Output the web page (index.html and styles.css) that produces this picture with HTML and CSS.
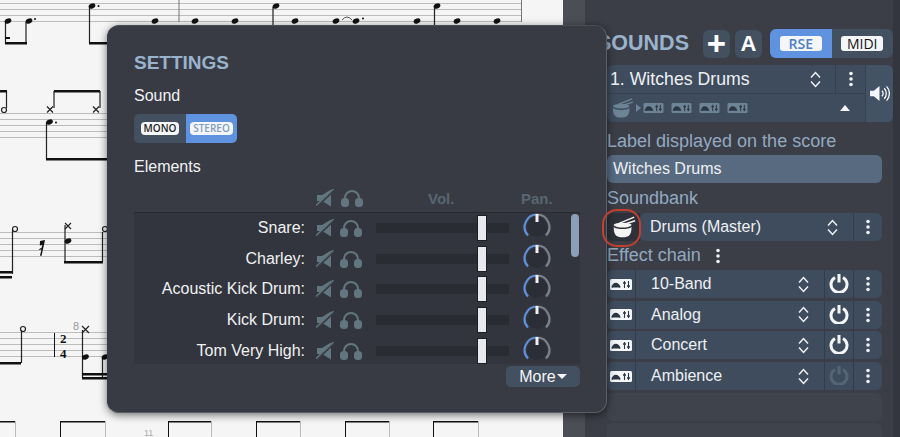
FILE: index.html
```html
<!DOCTYPE html>
<html lang="en">
<head>
<meta charset="utf-8">
<title>Sounds settings</title>
<link rel="stylesheet" href="styles.css">
</head>
<body>
<svg class="sprite" aria-hidden="true">
  <symbol id="i-mute" viewBox="0 0 18 18"><path d="M1 6h5l9-5.500v17L6 12H1z" fill="currentColor"/><path d="M0 18 18 1" stroke="#383b44" stroke-width="2.500"/><path d="M0 16.500 17.500 0" stroke="currentColor" stroke-width="1.400"/></symbol>
  <symbol id="i-head" viewBox="0 0 22 18"><path d="M4 11V9a7 7 0 0 1 14 0v2" fill="none" stroke="currentColor" stroke-width="2"/><rect x="0" y="9" width="8" height="9" rx="3.500" fill="currentColor"/><rect x="14" y="9" width="8" height="9" rx="3.500" fill="currentColor"/></symbol>
  <symbol id="i-knob" viewBox="0 0 30 30"><circle cx="15" cy="14" r="10" fill="#2b2e36"/><path d="M6 22.500A12.500 12.500 0 0 1 15 1.500" fill="none" stroke="#5f8fd8" stroke-width="2.200"/><path d="M15 1.500A12.500 12.500 0 0 1 24 22.500" fill="none" stroke="#7a818c" stroke-width="2.200"/><rect x="13.500" y="1" width="3" height="8" fill="#f0f0f4"/></symbol>
  <symbol id="i-updown" viewBox="0 0 11 17"><path d="M1 6.500 5.500 1.500 10 6.500M1 10.500 5.500 15.500 10 10.500" fill="none" stroke="currentColor" stroke-width="1.500"/></symbol>
  <symbol id="i-dots" viewBox="0 0 4 16"><circle cx="2" cy="2.500" r="1.800" fill="currentColor"/><circle cx="2" cy="8" r="1.800" fill="currentColor"/><circle cx="2" cy="13.500" r="1.800" fill="currentColor"/></symbol>
  <symbol id="i-power" viewBox="0 0 20 20"><path d="M6 4.500a8 8 0 1 0 8 0" fill="none" stroke="currentColor" stroke-width="3"/><path d="M10 1v8.500" stroke="currentColor" stroke-width="3"/></symbol>
  <symbol id="i-fx" viewBox="0 0 22 11"><rect width="22" height="11" rx="1.500" fill="currentColor"/><path d="M2 8.500C3.500 3 8 3 10 8.500" fill="#2d3744" stroke="#2d3744" stroke-width="1.500"/><path d="M14.500 2v7M18.500 2v7" stroke="#2d3744" stroke-width="1.100"/><path d="M13 4h3M17 7h3" stroke="#2d3744" stroke-width="1.300"/></symbol>
  <symbol id="i-drum" viewBox="0 0 28 24"><path d="M3 12c0 9 3 11.500 10 11.500S23 21 23 12c-3 3-17 3-20 0z" fill="currentColor"/><path d="M3 10c3 3.500 17 3.500 20 0v-.5c-2-3-18-3-20 0z" fill="currentColor"/><path d="M9 8 26 1M13 9.500 27 5" stroke="currentColor" stroke-width="1.600"/></symbol>
  <symbol id="i-speaker" viewBox="0 0 22 18"><path d="M1 6h4l6-5v16l-6-5H1z" fill="currentColor"/><path d="M13.500 6a4 4 0 0 1 0 6M16 3.500a8 8 0 0 1 0 11M18.500 1.500a11 11 0 0 1 0 15" fill="none" stroke="currentColor" stroke-width="1.400"/></symbol>
</svg>

<div class="app">
  <main class="score">
    <svg class="notation" width="563" height="437" viewBox="0 0 563 437">
      <g stroke="#bcbcbc" stroke-width="1" fill="none">
        <path d="M0 3.500H521M0 9.500H521M0 15.500H521M0 21.500H521"/>
        <path d="M0 113.500H107M0 119.500H107M0 125.500H107M0 131.500H107M0 137.500H107"/>
        <path d="M0 232.500H107M0 238.500H107M0 244.500H107M0 250.500H107M0 256.500H107"/>
        <path d="M0 332.500H107M0 338.500H107M0 344.500H107M0 350.500H107M0 356.500H107"/>
        <path d="M15.500 421V437M105.500 421V437M211.500 421V437M300.500 421V437M389.500 421V437M478.500 421V437"/>
      </g>
      <path d="M179 0V22M521.500 0V22" stroke="#777" stroke-width="1" fill="none"/>
      <path d="M342 20Q347 14 352 20" stroke="#555" stroke-width="1" fill="none"/>
      <g stroke="#222" stroke-width="1.200" fill="none">
        <path d="M5.500 22V43M26 22V43M89.500 7V43M46.500 122V159M54 91V108M100 91V108M6.500 91V108M65 225V262M102.500 232V262M12.500 230V274M21.500 330V363M82.500 330V378M102.500 358V378M273 7V25M434.500 7V25"/>
        <path d="M47 106.500 53 112.500M53 106.500 47 112.500M93 106.500 99 112.500M99 106.500 93 112.500M65 223 71 229M71 223 65 229M82 326 89 333M89 326 82 333"/>
        <circle cx="4" cy="110" r="2.500"/><circle cx="15" cy="229" r="2.500"/><circle cx="105" cy="229" r="2.500"/><circle cx="23" cy="329" r="2.500"/>
      </g>
      <g fill="#111">
        <path d="M5 42h22v2.500H5zM5 37h5v2H5zM89 42h18v2.500H89zM54 90h46v2.500H54zM0 90h7v2.500H0zM46 158h61v2.500H46zM0 271h12v2.500H0zM0 276h12v2.500H0zM64 261h39v2.500H64zM0 362h21v2.500H0zM82 373h25v2.500H82zM82 377h25v2.500H82z"/>
        <path d="M0 421h15v1.500H0zM60 421h45v1.500H60zM168 421h43v1.500h-43zM256 421h44v1.500h-44zM345 421h44v1.500h-44zM433 421h45v1.500h-45z"/>
        <path d="M60 421h1v16h-1zM168 421h1v16h-1zM256 421h1v16h-1zM345 421h1v16h-1zM433 421h1v16h-1z"/>
        <ellipse cx="8" cy="21" rx="3.500" ry="2.500" transform="rotate(-25 8 21)"/><ellipse cx="29" cy="21" rx="3.500" ry="2.500" transform="rotate(-25 29 21)"/><ellipse cx="92" cy="6" rx="3.500" ry="2.500" transform="rotate(-25 92 6)"/>
        <ellipse cx="155" cy="21" rx="3.500" ry="2.500" transform="rotate(-25 155 21)"/><ellipse cx="195" cy="21" rx="3.500" ry="2.500" transform="rotate(-25 195 21)"/><ellipse cx="235" cy="21" rx="3.500" ry="2.500" transform="rotate(-25 235 21)"/><ellipse cx="276" cy="6" rx="3.500" ry="2.500" transform="rotate(-25 276 6)"/><ellipse cx="295" cy="21" rx="3.500" ry="2.500" transform="rotate(-25 295 21)"/><ellipse cx="336" cy="21" rx="3.500" ry="2.500" transform="rotate(-25 336 21)"/>
        <ellipse cx="356" cy="21" rx="3.500" ry="2.500" transform="rotate(-25 356 21)"/><ellipse cx="417" cy="21" rx="3.500" ry="2.500" transform="rotate(-25 417 21)"/><ellipse cx="437" cy="6" rx="3.500" ry="2.500" transform="rotate(-25 437 6)"/><ellipse cx="457" cy="21" rx="3.500" ry="2.500" transform="rotate(-25 457 21)"/><ellipse cx="497" cy="21" rx="3.500" ry="2.500" transform="rotate(-25 497 21)"/>
        <ellipse cx="49.500" cy="122" rx="3.500" ry="2.500" transform="rotate(-25 49.500 122)"/><ellipse cx="68" cy="241" rx="3.500" ry="2.500" transform="rotate(-25 68 241)"/><ellipse cx="85.500" cy="357" rx="3.500" ry="2.500" transform="rotate(-25 85.500 357)"/><ellipse cx="105" cy="357" rx="3.500" ry="2.500" transform="rotate(-25 105 357)"/>
        <circle cx="98.500" cy="6" r="1"/><circle cx="35" cy="19" r="1"/><circle cx="56" cy="122.500" r="1"/><circle cx="363" cy="18.500" r="1"/>
        <path d="M40 241l5-1-3.500 16-1.500-.5 1.500-6-3 .5 1.500-1.500 1.500-.5.800-3-2.500.5z"/>
        <path d="M54 333h1v24h-1z"/>
      </g>
      <text class="time-sig" x="60" y="343">2</text>
      <text class="time-sig" x="60" y="358">4</text>
      <text class="bar-num" x="73" y="330">8</text>
      <text class="bar-num small" x="144" y="436">11</text>
    </svg>
  </main>

  <aside class="panel">
    <header class="panel-head">
      <h2 class="panel-title">SOUNDS</h2>
      <div class="head-actions">
        <button class="square-btn plus">+</button>
        <button class="square-btn letter">A</button>
        <div class="mode-toggle">
          <span class="mode on"><b>RSE</b></span>
          <span class="mode"><b>MIDI</b></span>
        </div>
      </div>
    </header>

    <section class="track">
      <div class="track-main">
        <div class="track-top">
          <span class="track-name">1. Witches Drums</span>
          <svg class="updown"><use href="#i-updown"/></svg>
          <span class="track-dots"><svg class="dots"><use href="#i-dots"/></svg></span>
        </div>
        <div class="track-bottom">
          <svg class="mini-drum"><use href="#i-drum"/></svg>
          <span class="mini-arrow"></span>
          <svg class="mini-fx"><use href="#i-fx"/></svg>
          <svg class="mini-fx"><use href="#i-fx"/></svg>
          <svg class="mini-fx"><use href="#i-fx"/></svg>
          <svg class="mini-fx"><use href="#i-fx"/></svg>
          <span class="collapse"></span>
        </div>
      </div>
      <div class="track-side"><svg class="speaker"><use href="#i-speaker"/></svg></div>
    </section>

    <div class="form">
      <label class="field-label">Label displayed on the score</label>
      <div class="text-input">Witches Drums</div>
      <label class="field-label">Soundbank</label>
      <div class="bank-row">
        <span class="bank-icon"><svg class="drum"><use href="#i-drum"/></svg><span class="red-ring"></span></span>
        <div class="row-box bank-box">
          <span class="row-name">Drums (Master)</span>
          <svg class="updown"><use href="#i-updown"/></svg>
          <span class="row-cell"><svg class="dots"><use href="#i-dots"/></svg></span>
        </div>
      </div>
      <div class="chain-title"><label class="field-label">Effect chain</label><svg class="dots"><use href="#i-dots"/></svg></div>
      <div class="chain">
        <div class="row-box fx-row">
          <span class="fx-cell"><svg class="fx"><use href="#i-fx"/></svg></span>
          <span class="row-name">10-Band</span>
          <svg class="updown"><use href="#i-updown"/></svg>
          <span class="row-cell"><svg class="power"><use href="#i-power"/></svg></span>
          <span class="row-cell"><svg class="dots"><use href="#i-dots"/></svg></span>
        </div>
        <div class="row-box fx-row">
          <span class="fx-cell"><svg class="fx"><use href="#i-fx"/></svg></span>
          <span class="row-name">Analog</span>
          <svg class="updown"><use href="#i-updown"/></svg>
          <span class="row-cell"><svg class="power"><use href="#i-power"/></svg></span>
          <span class="row-cell"><svg class="dots"><use href="#i-dots"/></svg></span>
        </div>
        <div class="row-box fx-row">
          <span class="fx-cell"><svg class="fx"><use href="#i-fx"/></svg></span>
          <span class="row-name">Concert</span>
          <svg class="updown"><use href="#i-updown"/></svg>
          <span class="row-cell"><svg class="power"><use href="#i-power"/></svg></span>
          <span class="row-cell"><svg class="dots"><use href="#i-dots"/></svg></span>
        </div>
        <div class="row-box fx-row">
          <span class="fx-cell"><svg class="fx"><use href="#i-fx"/></svg></span>
          <span class="row-name">Ambience</span>
          <svg class="updown"><use href="#i-updown"/></svg>
          <span class="row-cell"><svg class="power off"><use href="#i-power"/></svg></span>
          <span class="row-cell"><svg class="dots"><use href="#i-dots"/></svg></span>
        </div>
        <div class="fx-empty"></div>
        <div class="fx-empty"></div>
      </div>
    </div>
  </aside>

  <section class="popover">
    <h2 class="pop-title">SETTINGS</h2>
    <p class="pop-label">Sound</p>
    <div class="channel-toggle">
      <span class="channel"><b>MONO</b></span>
      <span class="channel on"><b>STEREO</b></span>
    </div>
    <p class="pop-label elements">Elements</p>
    <div class="table-head">
      <svg class="mute"><use href="#i-mute"/></svg>
      <svg class="head"><use href="#i-head"/></svg>
      <span class="col-vol">Vol.</span>
      <span class="col-pan">Pan.</span>
    </div>
    <div class="elements-box">
      <div class="element"><span class="el-name">Snare:</span><svg class="mute"><use href="#i-mute"/></svg><svg class="head"><use href="#i-head"/></svg><span class="fader"><span class="handle"></span></span><svg class="knob"><use href="#i-knob"/></svg></div>
      <div class="element"><span class="el-name">Charley:</span><svg class="mute"><use href="#i-mute"/></svg><svg class="head"><use href="#i-head"/></svg><span class="fader"><span class="handle"></span></span><svg class="knob"><use href="#i-knob"/></svg></div>
      <div class="element"><span class="el-name">Acoustic Kick Drum:</span><svg class="mute"><use href="#i-mute"/></svg><svg class="head"><use href="#i-head"/></svg><span class="fader"><span class="handle"></span></span><svg class="knob"><use href="#i-knob"/></svg></div>
      <div class="element"><span class="el-name">Kick Drum:</span><svg class="mute"><use href="#i-mute"/></svg><svg class="head"><use href="#i-head"/></svg><span class="fader"><span class="handle"></span></span><svg class="knob"><use href="#i-knob"/></svg></div>
      <div class="element"><span class="el-name">Tom Very High:</span><svg class="mute"><use href="#i-mute"/></svg><svg class="head"><use href="#i-head"/></svg><span class="fader"><span class="handle"></span></span><svg class="knob"><use href="#i-knob"/></svg></div>
      <span class="scrollbar"></span>
    </div>
    <div class="pop-foot"><button class="more">More<span class="more-caret"></span></button></div>
  </section>
</div>
</body>
</html>
```
FILE: styles.css
```css
* { box-sizing: border-box; }
html, body { margin: 0; height: 100%; overflow: hidden; }
body { font-family: "Liberation Sans", Arial, sans-serif; color: #eef0f3; background: #3a3d46; }
.sprite { position: absolute; width: 0; height: 0; }
svg { display: block; }
button { font: inherit; border: 0; padding: 0; color: inherit; }

.app { position: relative; display: flex; width: 900px; height: 437px; overflow: hidden; }

/* Score */
.score { width: 563px; flex: none; height: 100%; background: #f5f5f5; }
.notation { width: 563px; height: 437px; }
.time-sig { font: 700 13px "Liberation Serif", serif; fill: #111; }
.bar-num { font: 11px "Liberation Sans", sans-serif; fill: #999; }
.bar-num.small { font-size: 9px; fill: #aaa; }

/* Right panel */
.panel { flex: 1; height: 100%; padding: 29px 7px 0 27px; background: linear-gradient(90deg, #4c4e56 0, #4c4e56 22px, #3b3e47 22px, #3b3e47 330px, #33363e 330px); }
.panel-head { display: flex; align-items: center; justify-content: space-between; height: 29px; }
.panel-title { margin: 0 0 0 7px; font-size: 21.500px; font-weight: 700; color: #9ab3cd; line-height: 29px; }
.head-actions { display: flex; align-items: center; gap: 5px; }
.square-btn { width: 27px; height: 28px; border-radius: 6px; background: #43505f; color: #fff; font-weight: 700; display: flex; align-items: center; justify-content: center; }
.square-btn.plus { font-size: 33px; line-height: 28px; }
.square-btn.letter { font-size: 22px; }
.mode-toggle { display: flex; width: 123px; height: 29px; margin-left: 3px; border-radius: 6px; background: #43505f; overflow: hidden; }
.mode { flex: 1; display: flex; align-items: center; justify-content: center; }
.mode.on { background: #5f93e0; }
.mode b { display: block; padding: 0 5px; min-width: 42px; text-align: center; height: 15px; border-radius: 3px; background: #f4f6f9; color: #111; font: 400 14px/15px "Open Sans", sans-serif; }
.mode.on b { color: #4f7fc6; font-weight: 600; }

.track { display: flex; height: 57px; margin-top: 7px; margin-left: 17px; border-radius: 6px; background: #3f4c5e; overflow: hidden; }
.track-main { flex: 1; }
.track-top { display: flex; align-items: center; height: 29px; padding-left: 3px; border-bottom: 1px solid #36404e; }
.track-name { flex: 1; font-size: 17.700px; }
.track-dots { width: 30px; height: 28px; border-left: 1px solid #36404e; display: flex; align-items: center; justify-content: center; margin-left: 14px; }
.updown { width: 11px; height: 17px; color: #eef0f3; flex: none; }
.dots { width: 4px; height: 16px; color: #eef0f3; flex: none; }
.track-bottom { display: flex; align-items: center; height: 28px; padding-left: 3px; color: #6d8396; }
.mini-drum { width: 24px; height: 20px; color: #6d8396; }
.mini-arrow { width: 0; height: 0; margin: 0 2px; border-left: 5px solid #6d8396; border-top: 4px solid transparent; border-bottom: 4px solid transparent; }
.mini-fx { width: 21px; height: 10px; margin-right: 7px; color: #6d8396; }
.collapse { width: 0; height: 0; margin-left: auto; margin-right: 15px; border-bottom: 6px solid #f4f6f9; border-left: 5px solid transparent; border-right: 5px solid transparent; }
.track-side { width: 28px; border-left: 1px solid #36404e; background: #445266; display: flex; align-items: center; justify-content: center; }
.speaker { width: 21px; height: 17px; color: #f4f6f9; }

.form { margin: 0 11px 0 17px; }
.field-label { display: block; font-size: 18px; line-height: 21px; color: #92a9c1; }
.form > .field-label:first-child { margin-top: 9px; }
.text-input { height: 28px; margin-top: 3px; margin-bottom: 5px; padding-left: 6px; border-radius: 6px; background: #576a80; font-size: 16px; line-height: 28px; }
.bank-row { display: flex; height: 28px; margin-top: 4px; }
.bank-icon { position: relative; flex: none; width: 33px; display: flex; align-items: center; justify-content: center; background: #2e3139; border-radius: 6px 0 0 6px; }
.drum { width: 25px; height: 22px; color: #f4f4f4; }
.red-ring { position: absolute; z-index: 2; left: -5px; top: -4px; width: 39px; height: 38px; border: 2.500px solid #c4402e; border-radius: 15px; }
.row-box { display: flex; align-items: center; border-radius: 6px; background: #3f4c5e; height: 28px; }
.bank-box { flex: 1; padding-left: 10px; }
.row-name { flex: 1; font-size: 16px; }
.row-cell { width: 29px; height: 100%; flex: none; border-left: 1px solid #333d4a; display: flex; align-items: center; justify-content: center; }
.bank-box .updown { margin-right: 15px; }
.chain-title { display: flex; align-items: center; gap: 15px; margin-top: 4px; }
.chain { margin-top: 4px; display: flex; flex-direction: column; gap: 2.700px; }
.fx-cell { width: 29px; flex: none; height: 100%; border-right: 1px solid #333d4a; display: flex; align-items: center; justify-content: center; margin-right: 15px; }
.fx { width: 22px; height: 11px; color: #f4f6f9; }
.fx-row .updown { margin-right: 15px; }
.power { width: 20px; height: 20px; color: #f4f6f9; margin-top: -2px; }
.power.off { color: #556578; }
.fx-empty { height: 28px; border-radius: 6px; background: #3f434c; flex: none; }

/* Popover */
.popover { position: absolute; left: 107px; top: 25px; width: 500px; height: 388px; padding: 25px 26px 0; background: #383b44; border: 1px solid #5a5f68; border-top-color: #484c55; border-left-color: #383b44; border-radius: 12px; box-shadow: 0 2px 8px rgba(0,0,0,.55); }
.pop-title { margin: 0; font-size: 19px; line-height: 23px; font-weight: 700; color: #9ab3cd; }
.pop-label { margin: 12px 0 0; font-size: 16px; line-height: 20px; color: #f0f1f3; }
.pop-label.elements { margin-top: 14px; }
.channel-toggle { display: flex; width: 103px; height: 29px; margin-top: 8px; border-radius: 5px; background: #43505f; overflow: hidden; }
.channel { flex: 1; display: flex; align-items: center; justify-content: center; }
.channel.on { flex: 0 0 51px; background: #5f93e0; }
.channel b { padding: 0 3px; height: 13px; border-radius: 4px; background: #f4f6f9; color: #222; font: 600 10px/13px "Open Sans", sans-serif; }
.channel.on b { color: #7f9dc4; }

.table-head { display: flex; align-items: center; height: 18px; margin-top: 12px; padding-left: 182px; }
.table-head .mute { margin-right: 7px; }
.col-vol, .col-pan { font-size: 15px; font-weight: 700; color: #596671; }
.col-vol { margin-left: 65px; width: 93px; }
.mute { width: 18px; height: 18px; color: #62767f; flex: none; }
.head { width: 22px; height: 18px; color: #62767f; flex: none; margin-left: 6px; }
.table-head .head { margin-left: 0; }

.elements-box { position: relative; height: 152px; margin-top: 5px; background: #32353d; border-top: 1px solid #282a31; overflow: hidden; }
.element { display: flex; align-items: center; height: 30.600px; }
.el-name { width: 171px; text-align: right; font-size: 16px; color: #f0f1f3; flex: none; }
.element .mute { margin-left: 11px; }
.fader { position: relative; width: 133px; height: 10px; margin-left: 14px; background: #292c33; flex: none; }
.handle { position: absolute; left: 102px; top: -7px; width: 8px; height: 24px; background: #e8e9ee; box-shadow: 0 0 0 1px #1c1e24; }
.knob { width: 30px; height: 30px; margin-left: 13px; flex: none; }
.scrollbar { position: absolute; right: 1px; top: 1px; width: 8px; height: 43px; border-radius: 4px; background: #8ba0b6; }
.pop-foot { display: flex; justify-content: flex-end; margin-top: 2px; }
.more { display: flex; align-items: center; justify-content: center; width: 74px; height: 21px; border-radius: 5px; background: #43505f; font-size: 16px; color: #f4f6f9; }
.more-caret { width: 0; height: 0; margin-left: 1px; border-top: 5px solid #f4f6f9; border-left: 5px solid transparent; border-right: 5px solid transparent; }
```
